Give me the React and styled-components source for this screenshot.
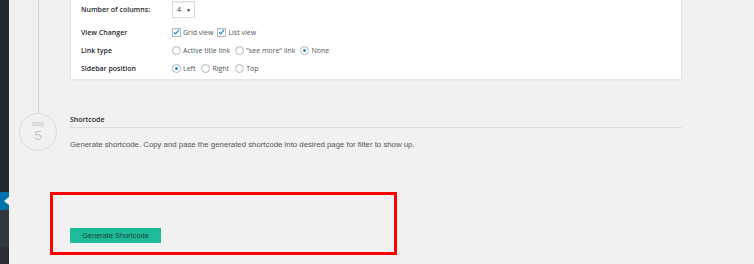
import React from "react";
import styled, { createGlobalStyle } from "styled-components";

const GlobalStyle = createGlobalStyle`
  html, body {
    margin: 0;
    padding: 0;
    background: #f1f1f1;
    overflow: hidden;
  }
  body {
    font-family: "Open Sans", "Noto Sans", sans-serif;
  }
`;

const Page = styled.div`
  display: flex;
  width: 754px;
  height: 264px;
  overflow: hidden;
`;

const Sidebar = styled.div`
  width: 9px;
  display: flex;
  flex-direction: column;
  background: #23282d;
`;

const SideFill = styled.div`
  flex: ${(p) => p.$flex || "none"};
  height: ${(p) => (p.$h ? `${p.$h}px` : "auto")};
  background: ${(p) => p.$bg};
  position: relative;
`;

const Arrow = styled.div`
  position: absolute;
  right: 0;
  top: 5px;
  width: 0;
  height: 0;
  border-top: 4px solid transparent;
  border-bottom: 4px solid transparent;
  border-right: 5px solid #f1f1f1;
`;

const Main = styled.div`
  flex: 1;
  display: grid;
  grid-template-columns: 61px 612px;
  grid-template-rows: 113px auto auto;
  align-content: start;
`;

const Marker = styled.div`
  display: flex;
  flex-direction: column;
  align-items: center;
  width: 38px;
  margin-left: 10px;
`;

const Line = styled.div`
  width: 1px;
  flex: 1;
  background: #d4d4d4;
`;

const Circle = styled.div`
  width: 36px;
  height: 36px;
  border: 1px solid #dadada;
  border-radius: 50%;
  display: flex;
  flex-direction: column;
  align-items: center;
  justify-content: center;
  color: #c4c4c4;
  font-family: "Liberation Sans", Arial, sans-serif;
  line-height: 1;
`;

const StepWord = styled.span`
  font-size: 6.5px;
  margin-top: -1px;
`;

const StepNum = styled.span`
  font-size: 13px;
  margin-top: 1px;
`;

const Panel = styled.div`
  background: #fff;
  border: 1px solid #e5e5e5;
  border-top: none;
  box-shadow: 0 1px 1px rgba(0, 0, 0, 0.04);
  height: 80px;
  box-sizing: border-box;
  padding: 0 10px;
`;

const FormRow = styled.div`
  display: grid;
  grid-template-columns: 91px 1fr;
  align-items: center;
  height: ${(p) => p.$h}px;
  margin-top: ${(p) => p.$mt || 0}px;
`;

const Label = styled.div`
  font-size: 7px;
  font-weight: 600;
  color: #23282d;
`;

const Options = styled.div`
  display: flex;
  align-items: center;
  font-size: 7px;
  color: #50575e;
`;

const Option = styled.label`
  display: flex;
  align-items: center;
  gap: 2px;
  margin-right: ${(p) => p.$gap}px;
`;

const Box = styled.span`
  width: 7px;
  height: 7px;
  border: 1px solid #b4b9be;
  background: #fff;
  display: inline-flex;
  align-items: center;
  justify-content: center;
  border-radius: ${(p) => (p.$round ? "50%" : "0")};
  box-shadow: inset 0 1px 1px rgba(0, 0, 0, 0.08);
`;

const Dot = styled.span`
  width: 3px;
  height: 3px;
  border-radius: 50%;
  background: #1e8cbe;
`;

const Select = styled.div`
  width: 14px;
  height: 15px;
  border: 1px solid #ddd;
  display: flex;
  align-items: center;
  justify-content: space-between;
  padding: 0 3px 0 4px;
  box-sizing: content-box;
  font-size: 7px;
  color: #32373c;
  margin-top: 1px;
  box-shadow: inset 0 1px 2px rgba(0, 0, 0, 0.07);
`;

const Caret = styled.span`
  font-size: 5px;
`;

const Section = styled.div`
  padding-top: 1px;
`;

const Heading = styled.div`
  font-size: 7px;
  font-weight: 600;
  color: #23282d;
  height: 13px;
  line-height: 11px;
  border-bottom: 1px solid #dcdcdc;
`;

const Text = styled.p`
  margin: 12px 0 0;
  font-family: "Liberation Sans", Arial, sans-serif;
  font-size: 7.8px;
  color: #555;
`;

const Highlight = styled.div`
  grid-column: 1 / -1;
  margin: 41px 0 0 41px;
  width: 347px;
  height: 63px;
  box-sizing: border-box;
  border: 3px solid #ff0000;
  display: flex;
  align-items: flex-end;
  padding: 0 0 9px 17px;
`;

const Button = styled.button`
  width: 91px;
  height: 15px;
  border: none;
  background: #1dbb98;
  color: #1f3d37;
  font-family: "Liberation Sans", Arial, sans-serif;
  font-size: 7.4px;
  padding: 0;
  cursor: pointer;
`;

const Check = () => (
  <svg width="8" height="8" viewBox="0 0 8 8">
    <path d="M1.2 4.2 L3.1 6.1 L6.9 1.6" fill="none" stroke="#1e8cbe" strokeWidth="1.4" />
  </svg>
);

const CheckOption = ({ label, gap }) => (
  <Option $gap={gap}>
    <Box>
      <Check />
    </Box>
    {label}
  </Option>
);

const RadioOption = ({ label, checked, gap }) => (
  <Option $gap={gap}>
    <Box $round>{checked && <Dot />}</Box>
    {label}
  </Option>
);

export default function App() {
  return (
    <>
      <GlobalStyle />
      <Page>
        <Sidebar>
          <SideFill $h={192} $bg="#23282d" />
          <SideFill $h={18} $bg="#0073aa">
            <Arrow />
          </SideFill>
          <SideFill $h={37} $bg="#32373c" />
          <SideFill $flex="1" $bg="#2a2e33" />
        </Sidebar>
        <Main>
          <Marker>
            <Line />
          </Marker>
          <div>
            <Panel>
              <FormRow $h={17}>
                <Label>Number of columns:</Label>
                <div>
                  <Select>
                    4<Caret>▼</Caret>
                  </Select>
                </div>
              </FormRow>
              <FormRow $h={18} $mt={6}>
                <Label>View Changer</Label>
                <Options>
                  <CheckOption label="Grid view" gap={4} />
                  <CheckOption label="List view" gap={0} />
                </Options>
              </FormRow>
              <FormRow $h={18}>
                <Label>Link type</Label>
                <Options>
                  <RadioOption label="Active title link" gap={5} />
                  <RadioOption label={'"see more" link'} gap={5} />
                  <RadioOption label="None" checked gap={0} />
                </Options>
              </FormRow>
              <FormRow $h={18}>
                <Label>Sidebar position</Label>
                <Options>
                  <RadioOption label="Left" checked gap={6} />
                  <RadioOption label="Right" gap={6} />
                  <RadioOption label="Top" gap={0} />
                </Options>
              </FormRow>
            </Panel>
          </div>
          <Marker>
            <Circle>
              <StepWord>step</StepWord>
              <StepNum>5</StepNum>
            </Circle>
          </Marker>
          <Section>
            <Heading>Shortcode</Heading>
            <Text>
              Generate shortcode. Copy and pase the generated shortcode into
              desired page for filter to show up.
            </Text>
          </Section>
          <Highlight>
            <Button>Generate Shortcode</Button>
          </Highlight>
        </Main>
      </Page>
    </>
  );
}
